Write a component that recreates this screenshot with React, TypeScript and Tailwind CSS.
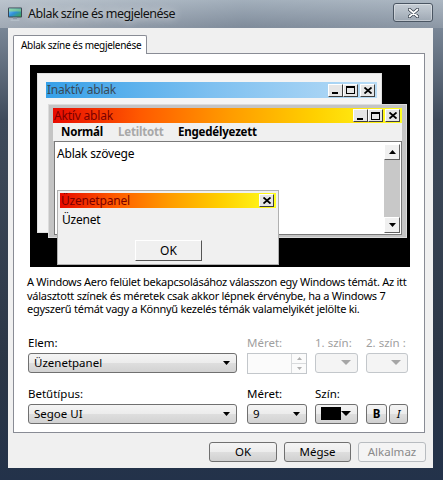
import React from "react";

const Tri = ({ color = "#000", w = 7, h = 4 }: { color?: string; w?: number; h?: number }) => (
  <svg width={w} height={h} viewBox={`0 0 ${w} ${h}`}>
    <path d={`M0 0H${w}L${w / 2} ${h}Z`} fill={color} />
  </svg>
);

function CapBtn({ kind }: { kind: "min" | "max" | "close" }) {
  return (
    <div className="w-[15px] h-[13px] bg-[#e6e6e6] border border-t-white border-l-white border-r-[#404040] border-b-[#404040] flex items-center justify-center">
      {kind === "min" && <div className="w-[6px] h-[2px] bg-black mt-[6px] -ml-[2px]" />}
      {kind === "max" && <div className="w-[9px] h-[8px] border border-black border-t-2" />}
      {kind === "close" && (
        <svg width="8" height="7" viewBox="0 0 8 7">
          <path d="M0.5 0.5L7.5 6.5M7.5 0.5L0.5 6.5" stroke="#000" strokeWidth="1.8" />
        </svg>
      )}
    </div>
  );
}

function ScrollBtn({ up }: { up?: boolean }) {
  return (
    <div className="w-[16px] h-[16px] bg-[#f0f0f0] border border-t-white border-l-white border-r-[#606060] border-b-[#606060] flex items-center justify-center">
      <svg width="7" height="4" viewBox="0 0 7 4">
        <path d={up ? "M0 4H7L3.5 0Z" : "M0 0H7L3.5 4Z"} fill="#000" />
      </svg>
    </div>
  );
}

function Combo({
  children,
  disabled,
  className = "",
  bigArrow,
}: {
  children?: React.ReactNode;
  disabled?: boolean;
  className?: string;
  bigArrow?: boolean;
}) {
  return (
    <div
      className={`flex items-center h-[20px] rounded-[3px] border pl-[5px] pr-[6px] ${
        disabled
          ? "border-[#c3c7cb] bg-[#f4f4f4]"
          : "border-[#707070] bg-[linear-gradient(#f4f4f4,#ececec_50%,#dedede_51%,#d2d2d2)]"
      } ${className}`}
    >
      <div className="flex-1 flex items-center text-[11.5px] text-black">{children}</div>
      {bigArrow ? <Tri color={disabled ? "#a6a6a6" : "#000"} w={10} h={5} /> : <Tri color={disabled ? "#a6a6a6" : "#000"} />}
    </div>
  );
}

function Btn({ children, disabled, className = "" }: { children: React.ReactNode; disabled?: boolean; className?: string }) {
  return (
    <div
      className={`h-[20px] rounded-[3px] border flex items-center justify-center text-[11.5px] ${
        disabled
          ? "border-[#b8bcc0] bg-[#f4f4f4] text-[#8a8a8a]"
          : "border-[#707070] bg-[linear-gradient(#f4f4f4,#ececec_50%,#dedede_51%,#d0d0d0)] text-black"
      } ${className}`}
    >
      {children}
    </div>
  );
}

const activeGrad = "bg-[linear-gradient(90deg,#e80a00,#ff5a00_25%,#ff9a00_50%,#ffd000_75%,#ffff20)]";

function Preview() {
  return (
    <div className="relative w-[380px] h-[202px] bg-black mt-[11px] ml-[16px] overflow-hidden">
      {/* inactive window */}
      <div className="absolute left-[7px] top-[8px] w-[345px] h-[160px] bg-[#f4f4f4] border border-[#e0e0e0] pt-[8px] pl-[8px] pr-[4px]">
        <div className="h-[16px] flex items-center bg-[linear-gradient(90deg,#36a0e8,#7ec0f0_50%,#b9dcf6)] pr-[2px]">
          <span className="text-[12px] leading-none text-[#3a4a58] pl-[1px] tracking-[-0.2px]">Inaktív ablak</span>
          <div className="ml-auto flex">
            <CapBtn kind="min" />
            <CapBtn kind="max" />
            <div className="ml-[2px]">
              <CapBtn kind="close" />
            </div>
          </div>
        </div>
      </div>

      {/* active window */}
      <div className="absolute left-[18px] top-[39px] w-[359px] h-[134px] bg-[#c4c4c4] border border-[#dcdcdc] pt-[3px] pl-[4px] pr-[4px] flex flex-col">
        <div className={`h-[15px] shrink-0 flex items-center ${activeGrad} pr-[2px]`}>
          <span className="text-[12px] leading-none text-[#7a0000] pl-[1px] tracking-[-0.2px]">Aktív ablak</span>
          <div className="ml-auto flex">
            <CapBtn kind="min" />
            <CapBtn kind="max" />
            <div className="ml-[2px]">
              <CapBtn kind="close" />
            </div>
          </div>
        </div>
        <div className="h-[18px] shrink-0 bg-[#f0f0f0] flex items-center pl-[8px] text-[11.5px] font-bold leading-none tracking-[-0.2px]">
          <span className="text-black w-[57px]">Normál</span>
          <span className="text-[#a8a8a8] w-[60px]">Letiltott</span>
          <span className="text-black">Engedélyezett</span>
        </div>
        <div className="h-[94px] shrink-0 ml-[1px] bg-white border border-[#7a7a7a] flex">
          <div className="flex-1 text-[12px] pl-[2px] pt-[6px] leading-none text-black tracking-[-0.2px]">Ablak szövege</div>
          <div className="w-[16px] flex flex-col bg-[#c8c8c8] mt-[2px] mb-[1px] mr-[1px]">
            <ScrollBtn up />
            <div className="flex-1" />
            <ScrollBtn />
          </div>
        </div>
      </div>

      {/* message box */}
      <div className="absolute left-[27px] top-[125px] w-[222px] h-[75px] bg-[#f0f0f0] border border-[#b0b0b0] pt-[2px] pl-[2px] pr-[2px]">
        <div className={`h-[15px] flex items-center ${activeGrad} pr-[2px]`}>
          <span className="text-[12px] leading-none text-[#7a0000] pl-[1px] tracking-[-0.2px]">Üzenetpanel</span>
          <div className="ml-auto">
            <CapBtn kind="close" />
          </div>
        </div>
        <div className="text-[12px] leading-none pl-[2px] pt-[6px] text-black tracking-[-0.2px]">Üzenet</div>
        <div className="ml-[75px] mt-[14px] w-[67px] h-[21px] bg-[#f0f0f0] border border-t-white border-l-white border-r-[#555] border-b-[#555] flex items-center justify-center text-[12px] text-black">
          OK
        </div>
      </div>
    </div>
  );
}

function TitleIcon() {
  return (
    <svg width="16" height="16" viewBox="0 0 16 16">
      <defs>
        <linearGradient id="scr" x1="0" y1="0" x2="1" y2="1">
          <stop offset="0" stopColor="#7fd0ff" />
          <stop offset="0.5" stopColor="#2f8fd8" />
          <stop offset="1" stopColor="#3aa84a" />
        </linearGradient>
      </defs>
      <rect x="1" y="1.5" width="14" height="10" rx="1" fill="#3a4652" />
      <rect x="2" y="2.5" width="12" height="8" fill="url(#scr)" />
      <rect x="2" y="2.5" width="12" height="3" fill="#9be07a" opacity="0.6" />
      <rect x="6" y="11.5" width="4" height="2" fill="#8a96a2" />
      <rect x="3.5" y="13.5" width="9" height="1.5" rx="0.5" fill="#b4bec8" />
    </svg>
  );
}

export default function App() {
  return (
    <div className="w-[443px] h-[480px] overflow-hidden bg-[linear-gradient(180deg,#9eabb8_0px,#7a8797_26px,#3f4b5b_120px,#2b3646_360px,#23324a_480px)] font-['Segoe_UI','Noto_Sans',sans-serif]">
      {/* title bar */}
      <div className="h-[28px] flex items-center pl-[7px] bg-[linear-gradient(90deg,rgba(255,255,255,0.3),rgba(255,255,255,0.05)_55%,rgba(255,255,255,0.15))]">
        <TitleIcon />
        <span className="ml-[5px] text-[12.5px] tracking-[-0.5px] text-[#111] [text-shadow:0_0_8px_rgba(255,255,255,0.9)]">
          Ablak színe és megjelenése
        </span>
        <div className="ml-auto mr-[10px] self-start mt-[3px] w-[40px] h-[19px] rounded-[3px] border border-[#4a5562] bg-[linear-gradient(rgba(255,255,255,0.35),rgba(255,255,255,0.1))] shadow-[inset_0_0_0_1px_rgba(255,255,255,0.35)] flex items-center justify-center">
          <svg width="11" height="10" viewBox="0 0 11 10">
            <path d="M1.5 1.5L9.5 8.5M9.5 1.5L1.5 8.5" stroke="#2a3440" strokeWidth="3.2" strokeLinecap="round" />
            <path d="M1.5 1.5L9.5 8.5M9.5 1.5L1.5 8.5" stroke="#fff" strokeWidth="1.8" strokeLinecap="round" />
          </svg>
        </div>
      </div>

      {/* client area */}
      <div className="ml-[8px] w-[425px] h-[440px] bg-[#f0f0f0] pt-[7px] pl-[5px] flex flex-col">
        {/* tab */}
        <div className="relative z-10 -mb-px w-[134px] h-[19px] bg-white border border-b-0 border-[#898c95] rounded-t-[2px] flex items-center pl-[7px] text-[10px] tracking-[-0.3px] whitespace-nowrap text-black">
          Ablak színe és megjelenése
        </div>
        {/* panel */}
        <div className="w-[412px] h-[380px] bg-white border border-[#898c95] flex flex-col">
          <Preview />

          <p className="mt-[8px] pl-[13px] text-[11px] leading-[13.5px] tracking-[-0.27px] text-black whitespace-nowrap">
            A Windows Aero felület bekapcsolásához válasszon egy Windows témát. Az itt
            <br />
            választott színek és méretek csak akkor lépnek érvénybe, ha a Windows 7
            <br />
            egyszerű témát vagy a Könnyű kezelés témák valamelyikét jelölte ki.
          </p>

          <div className="mt-[20px] pl-[14px] grid grid-cols-[211px_60px_43px_43px] gap-x-[8px] text-[11.5px] leading-[14px]">
            <span className="text-black">Elem:</span>
            <span className="text-[#a0a0a0]">Méret:</span>
            <span className="text-[#a0a0a0]">1. szín:</span>
            <span className="text-[#a0a0a0]">2. szín :</span>

            <Combo className="mt-[3px] w-[209px]">Üzenetpanel</Combo>
            <div className="mt-[3px] h-[21px] w-[60px] border border-[#c3c7cb] bg-[#fbfbfb] flex justify-end">
              <div className="w-[15px] flex flex-col border-l border-[#d8dadc]">
                <div className="flex-1 flex items-center justify-center border-b border-[#d8dadc]">
                  <svg width="5" height="3" viewBox="0 0 5 3"><path d="M0 3H5L2.5 0Z" fill="#b0b0b0" /></svg>
                </div>
                <div className="flex-1 flex items-center justify-center">
                  <Tri color="#b0b0b0" w={5} h={3} />
                </div>
              </div>
            </div>
            <Combo disabled bigArrow className="mt-[3px] w-[43px]" />
            <Combo disabled bigArrow className="mt-[3px] w-[42px]" />

            <span className="mt-[13px] text-black">Betűtípus:</span>
            <span className="mt-[13px] text-black">Méret:</span>
            <span className="mt-[13px] text-black">Szín:</span>
            <span className="mt-[13px]" />

            <Combo className="mt-[3px] w-[209px]">Segoe UI</Combo>
            <Combo className="mt-[3px] w-[60px]">9</Combo>
            <Combo bigArrow className="mt-[3px] w-[43px] pl-[3px]">
              <div className="w-[20px] h-[13px] bg-black" />
            </Combo>
            <div className="mt-[3px] flex gap-[2px]">
              <Btn className="w-[21px] font-bold">B</Btn>
              <Btn className="w-[19px] italic">I</Btn>
            </div>
          </div>
        </div>

        {/* dialog buttons */}
        <div className="mt-[9px] flex justify-end gap-[7px] pr-[7px]">
          <Btn className="w-[68px]">OK</Btn>
          <Btn className="w-[67px]">Mégse</Btn>
          <Btn disabled className="w-[68px]">Alkalmaz</Btn>
        </div>
      </div>
    </div>
  );
}
